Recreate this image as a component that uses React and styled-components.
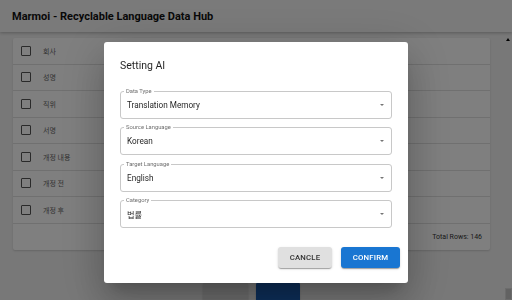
import React from "react";
import styled, { createGlobalStyle } from "styled-components";

const Global = createGlobalStyle`
  html, body { margin: 0; padding: 0; }
  body { font-family: Roboto, "Noto Sans CJK KR", sans-serif; background: #f0f0f0; overflow: hidden; }
`;

const Page = styled.div`
  width: 512px;
  height: 300px;
  display: flex;
  flex-direction: column;
  overflow: hidden;
`;

const Header = styled.header`
  height: 32px;
  flex: none;
  display: flex;
  align-items: center;
  padding-left: 12px;
  background: #f5f5f5;
  box-shadow: 0 1px 3px rgba(0,0,0,0.25);
  position: relative;
  z-index: 1;
`;

const Title = styled.h1`
  margin: 0;
  font: 700 11px Roboto, "Noto Sans CJK KR", sans-serif;
  color: #111;
`;

const Main = styled.div`
  flex: 1;
  display: flex;
  min-height: 0;
`;

const Content = styled.div`
  flex: 1;
  padding: 6px 13px 0 13px;
  display: flex;
  flex-direction: column;
`;

const Card = styled.div`
  background: #fff;
  border-radius: 2px;
  box-shadow: 0 1px 2px rgba(0,0,0,0.15);
`;

const Row = styled.div`
  height: 26.5px;
  box-sizing: border-box;
  display: flex;
  align-items: center;
  border-bottom: 1px solid #e0e0e0;
  padding-left: 8px;
  gap: 12px;
`;

const Check = styled.span`
  width: 10px;
  height: 10px;
  box-sizing: border-box;
  border: 1.5px solid #555;
  border-radius: 1px;
`;

const RowText = styled.span`
  font: 400 7px "Noto Sans CJK KR", Roboto, sans-serif;
  color: #666;
`;

const Footer = styled.div`
  height: 26.5px;
  display: flex;
  align-items: center;
  justify-content: flex-end;
  padding-right: 8px;
  font: 400 7px Roboto, sans-serif;
  color: #333;
`;

const Actions = styled.div`
  margin-top: 32px;
  display: flex;
  justify-content: center;
  gap: 8px;
`;

const BgButton = styled.div`
  width: ${p => p.$w}px;
  height: 20px;
  border-radius: 3px;
  background: ${p => (p.$primary ? "#1a5eb4" : "#dcdcdc")};
  box-shadow: 0 1px 2px rgba(0,0,0,0.2);
`;

const Track = styled.div`
  width: 9px;
  flex: none;
  display: flex;
  flex-direction: column;
  align-items: center;
  justify-content: space-between;
  padding-top: 6px;
`;

const UpArrow = styled.span`
  width: 0;
  height: 0;
  border-left: 2.5px solid transparent;
  border-right: 2.5px solid transparent;
  border-bottom: 3px solid #000;
`;

const Thumb = styled.span`
  width: 7px;
  height: 12px;
  box-sizing: border-box;
  border: 1px solid #d8d8d8;
  background: #c4c4c4;
  margin-right: -1px;
`;

const Backdrop = styled.div`
  position: fixed;
  inset: 0;
  background: rgba(0,0,0,0.5);
  display: flex;
  justify-content: center;
  align-items: flex-start;
  padding-top: 42px;
  z-index: 10;
`;

const Dialog = styled.div`
  width: 304px;
  height: 241px;
  box-sizing: border-box;
  background: #fff;
  border-radius: 3px;
  box-shadow: 0 11px 15px -7px rgba(0,0,0,0.2), 0 24px 38px 3px rgba(0,0,0,0.14), 0 9px 46px 8px rgba(0,0,0,0.12);
  padding: 16px 8px 15px 16px;
  display: flex;
  flex-direction: column;
`;

const DialogTitle = styled.h2`
  margin: 0;
  font: 400 10.5px/16px Roboto, sans-serif;
  color: rgba(0,0,0,0.87);
`;

const Fields = styled.div`
  margin-top: 16.5px;
  margin-right: 8px;
  display: flex;
  flex-direction: column;
  gap: 8.5px;
`;

const Field = styled.div`
  position: relative;
  height: 28px;
  box-sizing: border-box;
  border: 1px solid #c8c8c8;
  border-radius: 3px;
  display: flex;
  align-items: center;
  padding: 0 7px 0 6px;
`;

const Label = styled.span`
  position: absolute;
  left: 3px;
  top: -4px;
  padding: 0 2px;
  background: #fff;
  font: 400 5.8px/7px Roboto, sans-serif;
  color: rgba(0,0,0,0.6);
`;

const Value = styled.span`
  flex: 1;
  font: 400 8.2px Roboto, "Noto Sans CJK KR", sans-serif;
  color: rgba(0,0,0,0.87);
`;

const Caret = styled.span`
  width: 0;
  height: 0;
  border-left: 2.5px solid transparent;
  border-right: 2.5px solid transparent;
  border-top: 2.5px solid rgba(0,0,0,0.54);
`;

const DialogActions = styled.div`
  margin-top: auto;
  display: flex;
  justify-content: flex-end;
  gap: 9px;
`;

const Button = styled.button`
  height: 21px;
  width: ${p => p.$w}px;
  border: none;
  border-radius: 3px;
  padding: 0;
  font: 500 7.8px Roboto, sans-serif;
  letter-spacing: 0.2px;
  text-transform: uppercase;
  color: ${p => (p.$primary ? "#fff" : "rgba(0,0,0,0.8)")};
  background: ${p => (p.$primary ? "#1976d2" : "#e0e0e0")};
  box-shadow: 0 2px 1px -1px rgba(0,0,0,0.2), 0 1px 1px 0 rgba(0,0,0,0.14), 0 1px 3px 0 rgba(0,0,0,0.12);
`;

const rows = ["회사", "성명", "직위", "서명", "개정 내용", "개정 전", "개정 후"];
const fields = [
  ["Data Type", "Translation Memory"],
  ["Source Language", "Korean"],
  ["Target Language", "English"],
  ["Category", "법률"],
];

export default function App() {
  return (
    <Page>
      <Global />
      <Header>
        <Title>Marmoi - Recyclable Language Data Hub</Title>
      </Header>
      <Main>
        <Content>
          <Card>
            {rows.map(r => (
              <Row key={r}>
                <Check />
                <RowText>{r}</RowText>
              </Row>
            ))}
            <Footer>Total Rows: 146</Footer>
          </Card>
          <Actions>
            <BgButton $w={45} />
            <BgButton $w={44} $primary />
          </Actions>
        </Content>
        <Track>
          <UpArrow />
          <Thumb />
        </Track>
      </Main>
      <Backdrop>
        <Dialog>
          <DialogTitle>Setting AI</DialogTitle>
          <Fields>
            {fields.map(([l, v]) => (
              <Field key={l}>
                <Label>{l}</Label>
                <Value>{v}</Value>
                <Caret />
              </Field>
            ))}
          </Fields>
          <DialogActions>
            <Button $w={54}>Cancle</Button>
            <Button $w={59} $primary>Confirm</Button>
          </DialogActions>
        </Dialog>
      </Backdrop>
    </Page>
  );
}
